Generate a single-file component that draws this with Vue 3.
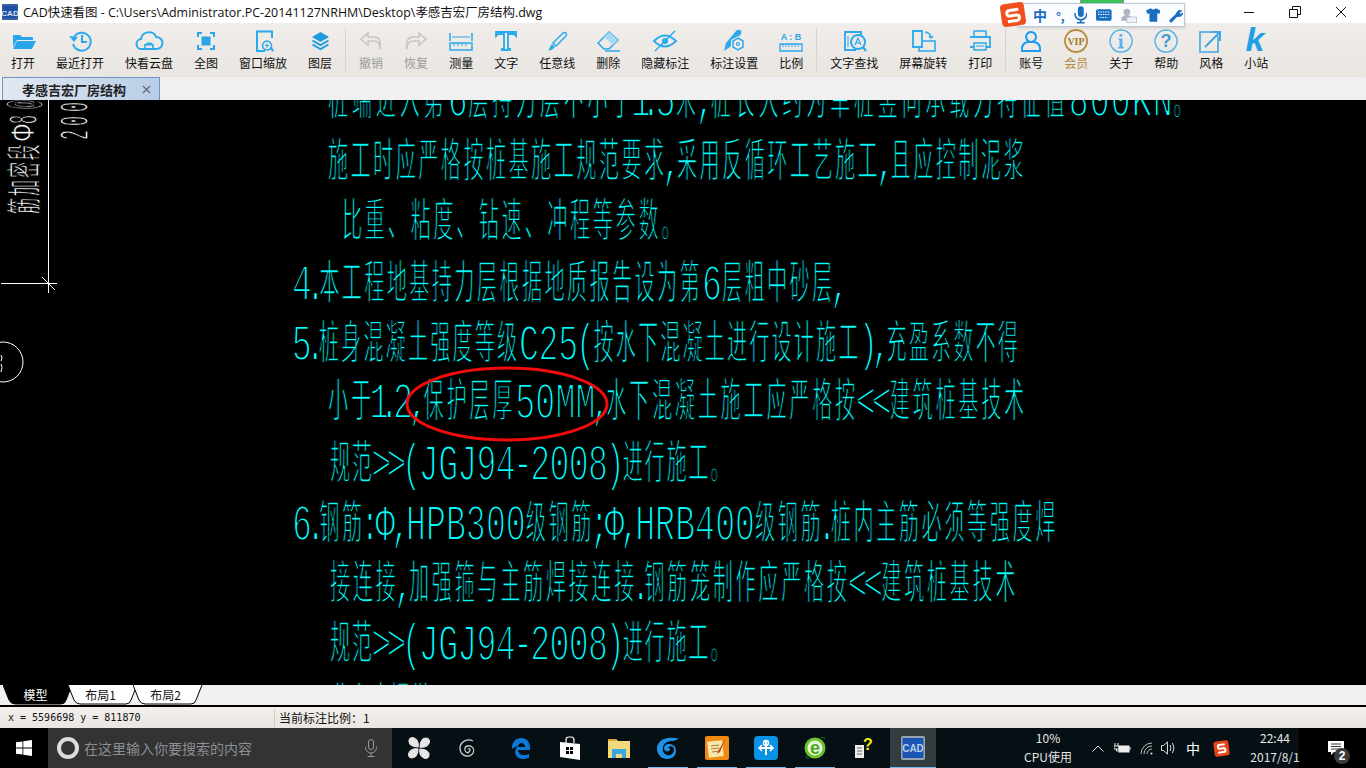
<template>
  <div class="app">
    <header class="titlebar">
      <svg class="app-icon" width="16" height="16" viewBox="0 0 16 16">
        <rect width="16" height="16" rx="1" fill="#3b5f9e" />
        <rect x="1" y="2" width="14" height="12" fill="#1f4fa8" />
        <text x="8" y="11.500" text-anchor="middle" font-size="8" font-weight="700" fill="#d8e4f4" font-family="Liberation Sans">CAD</text>
      </svg>
      <span class="title-text">CAD快速看图 - C:\Users\Administrator.PC-20141127NRHM\Desktop\孝感吉宏厂房结构.dwg</span>
      <div class="win-controls">
        <svg width="12" height="12" viewBox="0 0 12 12"><path d="M1 6.500h10" stroke="#111" /></svg>
        <svg width="12" height="12" viewBox="0 0 12 12" fill="none" stroke="#111"><path d="M.5 3.500h8v8h-8zM3.500 3.500v-3h8v8h-3" /></svg>
        <svg width="12" height="12" viewBox="0 0 12 12"><path d="M1 1l10 10M11 1L1 11" stroke="#111" /></svg>
      </div>
    </header>

    <nav class="toolbar">
      <template v-for="item in tools" :key="item.label">
        <div v-if="item.sep" class="tool-sep"></div>
        <div class="tool" :class="{ muted: item.muted, gold: item.gold }">
          <svg class="tool-icon" width="32" height="28" viewBox="0 0 32 28">
            <template v-for="(p, i) in item.icon" :key="i">
              <text v-if="p.text" :x="p.x" :y="p.y" text-anchor="middle" :font-size="p.size" :font-weight="p.weight || 700"
                :font-style="p.italic ? 'italic' : 'normal'" :font-family="p.family || 'Liberation Sans'" :fill="p.color || item.color">{{ p.text }}</text>
              <path v-else :d="p.d" :fill="p.fill ? (p.color || item.color) : 'none'"
                :stroke="p.fill ? 'none' : (p.color || item.color)" :stroke-width="p.w || 2" />
            </template>
          </svg>
          <span class="tool-label">{{ item.label }}</span>
        </div>
      </template>
    </nav>

    <div class="tabrow">
      <div class="doc-tab">
        <span>孝感吉宏厂房结构</span>
        <svg width="9" height="9" viewBox="0 0 9 9"><path d="M1 1l7 7M8 1L1 8" stroke="#667" stroke-width="1.200" /></svg>
      </div>
    </div>

    <main class="canvas">
      <svg width="1366" height="585" viewBox="0 100 1366 585">
        <g stroke="#fff" fill="none" stroke-width="1">
          <path d="M48.500 100V293M1 283.500H57M42 277l13 13" />
          <circle cx="3" cy="362" r="20" />
          <path d="M1 355q2 3 0 6M1 364q2 3 0 8" />
        </g>
        <g class="cad-white">
          <text transform="translate(37 214) rotate(-90) scale(.46 1)" x="0 39 78 117">筋加密段</text>
          <text transform="translate(34 141) rotate(-90) scale(.8 1)">Φ</text>
          <text class="dim" transform="translate(37 124) rotate(-90) scale(.36 1)" x="0 42">8@</text>
          <text class="dim" transform="translate(88 140) rotate(-90) scale(.4 1)" x="0 35 70 105">2000</text>
        </g>
        <g class="cad-cyan">
          <text v-for="run in cadRuns" :key="run.key" :class="{ latin: run.latin }" :transform="`scale(${run.k} 1)`" :x="run.xs" :y="run.y">{{ run.t }}</text>
        </g>
        <ellipse cx="507" cy="404" rx="100" ry="36" fill="none" stroke="#f00c0c" stroke-width="3" />
      </svg>
    </main>

    <div class="sheets">
      <div v-for="(s, i) in sheets" :key="s" class="sheet" :class="{ active: i === 0 }">
        <svg width="70" height="20" viewBox="0 0 70 20">
          <path d="M0 0L6 15Q8 19 12 19H58Q62 19 63 15L69 0" :fill="i === 0 ? '#000' : '#fff'" stroke="#000" />
        </svg>
        <span>{{ s }}</span>
      </div>
    </div>

    <footer class="statusbar">
      <div class="coords">x = 5596698 y = 811870</div>
      <div class="scale">当前标注比例：1</div>
    </footer>

    <div class="taskbar">
      <div class="start">
        <svg width="16" height="16" viewBox="0 0 16 16" fill="#fff"><path d="M0 2.300l6.500-.9v6.200H0zM7.300 1.300L16 0v7.600H7.300zM0 8.400h6.500v6.200L0 13.700zM7.300 8.400H16V16l-8.700-1.200z" /></svg>
      </div>
      <div class="search">
        <span class="cortana"></span>
        <span class="search-text">在这里输入你要搜索的内容</span>
        <svg class="mic" width="14" height="18" viewBox="0 0 14 18" fill="none" stroke="#999"><rect x="4.500" y=".5" width="5" height="10" rx="2.500" /><path d="M1.500 7.500v1a5.500 5.500 0 0 0 11 0v-1M7 14v3M3.500 17.500h7" /></svg>
      </div>
      <div class="apps">
        <div class="app-slot">
          <svg width="22" height="22" viewBox="0 0 22 22" fill="#e6e6e6" stroke="#e6e6e6" stroke-width="1.200"><path d="M10 10C4 10 1 7 1 4s3-4 5-3 5 4 4 9zM12 10c0-6 3-9 6-9s4 3 3 5-4 5-9 4zM12 12c6 0 9 3 9 6s-3 4-5 3-5-4-4-9zM10 12c0 6-3 9-6 9s-4-3-3-5 4-5 9-4z" /></svg>
        </div>
        <div class="app-slot">
          <svg width="20" height="20" viewBox="0 0 20 20" fill="none" stroke="#ccc" stroke-width="1.300"><path d="M15 3C9 0 2 4 2 10s5 9 9 8 6-5 4-8-7-3-8 0 2 6 4 4 1-4-1-3" /></svg>
        </div>
        <div class="app-slot">
          <svg width="20" height="22" viewBox="0 0 20 22" fill="#0c78d6"><path d="M1 11C1 5 5 1 10 1c6 0 9 4 9 10v2H7c0 3 3 5 6 5 2 0 4-.5 5-1.500v4c-2 1-4 1.500-6 1.500-5 0-7-3-8-6 0-3 1-5 3-7-3 1-5 2-6 3zm6-1h7c0-2-1.500-4-3.500-4S7 8 7 10z" /></svg>
        </div>
        <div class="app-slot">
          <svg width="20" height="24" viewBox="0 0 20 24" fill="#fff"><path d="M6 7V4q0-3 3-3h2q3 0 3 3v3" fill="none" stroke="#fff" stroke-width="1.200" /><path d="M0 6l20 2v16L0 21z" /><path d="M6 11h3v3H6zM10 11h3v3h-3zM6 15h3v3H6zM10 15h3v3h-3z" fill="#000" /></svg>
        </div>
        <div class="app-slot">
          <svg width="22" height="20" viewBox="0 0 22 20"><path d="M0 1h8l2 2h12v17H0z" fill="#f3d97c" /><path d="M0 1h8v2H0z" fill="#d9a93c" /><path d="M4 11h14v9h-4v-4H8v4H4z" fill="#3ba7e0" /></svg>
        </div>
        <div class="app-slot">
          <svg width="24" height="24" viewBox="0 0 24 24"><path d="M23 2c-3 1-6-1-11 0C5 3 1 7 1 13s5 10 10 10 9-3 9-8-3-7-7-7c-3 0-5 2-5 4 0 3 3 4 5 3 2-1 1-3-1-3 2-3 6-2 6 2s-4 6-7 5c-3-1-5-4-4-8 1-4 5-6 9-6 3 0 5-1 7-3z" fill="#1e90e8" /></svg>
        </div>
        <div class="app-slot">
          <svg width="24" height="24" viewBox="0 0 24 24"><rect width="24" height="24" rx="2" fill="#f28a12" /><rect x="3" y="5" width="15" height="16" fill="#fbe7ad" transform="rotate(-6 10 13)" /><path d="M6 10l8-1M6 13l8-1M7 16l8-1" stroke="#a57a40" /><path d="M21 2L13 15l-1 3 3-2z" fill="#b5501e" /></svg>
        </div>
        <div class="app-slot">
          <svg width="24" height="24" viewBox="0 0 24 24"><rect width="24" height="24" rx="4" fill="#0a93e6" /><path d="M12 5v14M5 12h14" stroke="#fff" stroke-width="2" /><circle cx="12" cy="7" r="2.500" fill="none" stroke="#fff" stroke-width="1.500" /><path d="M8 9l-3 3 3 3M16 9l3 3-3 3" fill="none" stroke="#fff" stroke-width="1.500" /></svg>
        </div>
        <div class="app-slot">
          <svg width="24" height="24" viewBox="0 0 24 24"><circle cx="12" cy="12" r="10.500" fill="#6cc22c" /><circle cx="12" cy="12" r="7.500" fill="#e8f6dc" /><text x="12" y="18" text-anchor="middle" font-size="18" font-weight="700" fill="#4ea81e" font-family="Liberation Sans">e</text><path d="M4 20q-2 3 2 2M18 2q4-2 4 1" stroke="#1c6e1c" fill="none" /></svg>
        </div>
        <div class="app-slot">
          <svg width="20" height="22" viewBox="0 0 20 22"><path d="M1 8h9v13H1z" fill="#eee" /><path d="M3 11h5M3 14h5M3 17h5" stroke="#666" /><text x="14" y="13" text-anchor="middle" font-size="16" font-weight="700" fill="#f6e812" font-family="Liberation Sans">?</text></svg>
        </div>
        <div class="app-slot current">
          <svg width="24" height="24" viewBox="0 0 24 24"><rect width="24" height="24" rx="2" fill="#9aa4ae" /><rect x="1.500" y="2" width="21" height="20" fill="#1b56b4" /><text x="12" y="16" text-anchor="middle" font-size="10" font-weight="700" fill="#b9cde8" font-family="Liberation Sans">CAD</text></svg>
        </div>
      </div>
      <div class="tray">
        <div class="cpu"><span>10%</span><span>CPU使用</span></div>
        <svg class="t-chev" width="12" height="7" viewBox="0 0 12 7" fill="none" stroke="#ddd"><path d="M.5 6.500L6 1l5.500 5.500" /></svg>
        <svg class="t-bat" width="17" height="11" viewBox="0 0 17 11"><path d="M1 0v3M4 0v3M0 3h5v3H0zM2.500 6v2h2" stroke="#eee" fill="none" /><rect x="4.500" y="2.500" width="11" height="7" fill="#eee" /><path d="M16 4v3" stroke="#eee" /></svg>
        <svg class="t-wifi" width="14" height="13" viewBox="0 0 14 13" fill="none" stroke="#bbb"><path d="M1 12A11 11 0 0 1 12 1M4 12a8 8 0 0 1 8-8M7 12a5 5 0 0 1 5-5" /><circle cx="11.500" cy="11.500" r="1" fill="#eee" stroke="none" /></svg>
        <svg class="t-vol" width="16" height="14" viewBox="0 0 16 14" fill="none" stroke="#ddd"><path d="M.5 4.500h2l4-3.500v12l-4-3.500h-2zM9 4q2 3 0 6M11.500 2q3 5 0 10" /></svg>
        <span class="t-ime">中</span>
        <span class="t-sogou"><svg width="15" height="15" viewBox="0 0 16 16"><path d="M12 4H6Q4.500 4 4.500 6T6 8h4q2 0 2 2t-2 2H4" fill="none" stroke="#fff" stroke-width="2.300" /></svg></span>
        <div class="clock"><span>22:44</span><span>2017/8/1</span></div>
      </div>
      <div class="notify">
        <svg width="16" height="14" viewBox="0 0 16 14"><path d="M0 0h16v11H6l-3 3v-3H0z" fill="#fff" /><path d="M3 3h10M3 5.500h10M3 8h10" stroke="#333" /></svg>
        <span class="badge">2</span>
      </div>
      <i v-for="u in underlines" :key="u[0]" class="underline" :style="{ left: u[0] + 'px', width: u[1] + 'px' }"></i>
    </div>

    <div class="sogou">
      <div class="sogou-tab"></div>
      <div class="sogou-panel">
        <span class="sg-zh">中</span>
        <span class="sg-punc">°,</span>
        <svg width="14" height="18" viewBox="0 0 14 18" fill="#1a6ec2"><rect x="4" y="0" width="6" height="11" rx="3" /><path d="M1 7v1a6 6 0 0 0 12 0V7M7 14v3M3 17h8" fill="none" stroke="#1a6ec2" stroke-width="1.600" /></svg>
        <svg width="16" height="12" viewBox="0 0 16 12"><rect width="16" height="12" rx="2" fill="#1a6ec2" /><path d="M2 3h12M2 5.500h12M4 8.500h8" stroke="#fff" stroke-dasharray="1.500 1" /></svg>
        <svg width="16" height="15" viewBox="0 0 16 15"><circle cx="6" cy="4" r="3.500" fill="#aeb8c4" /><path d="M0 13q0-6 6-6 4 0 5 3v3z" fill="#aeb8c4" /><rect x="6" y="9" width="10" height="6" fill="#eef1f5" stroke="#a0a8b4" stroke-width=".6" /></svg>
        <svg width="15" height="14" viewBox="0 0 15 14" fill="#1a6ec2"><path d="M5 0L0 2.500 1.500 6 3.500 5.300V14h8V5.300L13.500 6 15 2.500 10 0Q7.500 2.500 5 0z" /></svg>
        <svg width="15" height="15" viewBox="0 0 15 15" fill="none" stroke="#1a6ec2"><path d="M2 13L8 7" stroke-width="3.200" stroke-linecap="round" /><path d="M8 8a4 4 0 0 1 5-5.500L10.500 5l1 1.500L14 5a4 4 0 0 1-6 3z" fill="#1a6ec2" stroke-width="1" /></svg>
      </div>
      <div class="sogou-logo"><svg width="18" height="18" viewBox="0 0 18 18"><path d="M15 4H6Q3 4 3 7T6 9.500h6Q15 9.500 15 12t-3 3H3" fill="none" stroke="#fff" stroke-width="3" /></svg></div>
    </div>
  </div>
</template>

<script setup>
const blue = '#2aa9ec'
const grey = '#c6c6c6'
const s = (d, w) => ({ d, w })
const f = (d, color) => ({ d, fill: true, color })

const tools = [
  { label: '打开', color: '#2aa5ea', icon: [f('M6 8h7l2 2h11v3H10l-4 7z'), f('M10 14h19l-4 8H6z')] },
  { label: '最近打开', color: blue, icon: [s('M10 10a9 9 0 1 1 -1 7'), f('M5 9l5 6 4-5z'), s('M18 8v7h5')] },
  { label: '快看云盘', color: blue, icon: [s('M9 22a5 5 0 0 1-1-10c1-8 13-9 15-2a6 6 0 0 1 1 12z'), s('M12 20a4 4 0 0 1 8 0v2h-8z', 1.500), f('M11 17h10v1.500H11z')] },
  { label: '全图', color: '#2aa5ea', icon: [s('M8 10V6h4M20 6h4v4M24 18v4h-4M12 22H8v-4'), f('M11.500 9.500h9v9h-9z')] },
  { label: '窗口缩放', color: blue, icon: [s('M25 11V4.500H10V24h8'), s('M20 14a4.500 4.500 0 1 0 .1 0z', 1.500), s('M23.500 21l3 3', 2.200), s('M18 18.500h4M20 16.500v4', 1.200)] },
  { label: '图层', color: '#1f9be0', icon: [f('M16.500 5l8.500 5-8.500 5L8 10z'), s('M8.500 13.500l8 4.500 8-4.500'), s('M8.500 17.500l8 4.500 8-4.500')] },
  { label: '撤销', color: grey, sep: true, muted: true, icon: [s('M13 6l-7 6 7 6v-4h6q6 0 6 8 2-12-6-12h-6z', 1.500)] },
  { label: '恢复', color: grey, muted: true, icon: [s('M19 6l7 6-7 6v-4h-6q-6 0-6 8-2-12 6-12h6z', 1.500)] },
  { label: '测量', color: blue, icon: [s('M5 6v8M27 6v8', 1.500), f('M7 9.500h18v1H7z'), s('M5 16h22v7H5z', 1.500), s('M9 16v3M13 16v3M17 16v3M21 16v3', 1)] },
  { label: '文字', color: blue, icon: [s('M6 9V5h20v4l-2-2h-6v15h2v1h-8v-1h2V7H8z', 1.800)] },
  { label: '任意线', color: blue, icon: [s('M12 16L22 6q2-1 3 0t0 3L15 19z', 1.500), f('M11 17l3 3-2 2q-2 2-5 1 2-1 2-3z')] },
  { label: '删除', color: blue, icon: [s('M6 16L17 5l9 8-9 9h-5z', 1.500), f('M12 10l5-5 9 8-5 5z', '#a8d8f4'), s('M13 24h15', 1.500)] },
  { label: '隐藏标注', color: blue, icon: [s('M5 14q11-11 22 0-11 11-22 0z', 1.800), f('M13 14a3 3 0 1 0 6 0 3 3 0 1 0-6 0z'), s('M6 24L26 4', 1.500)] },
  { label: '标注设置', color: blue, icon: [f('M6 24l2-8 10-12q2-2 4-1t1 4L12 20z'), f('M20 9l7 4v8l-7 4-7-4v-8z', '#efebe7'), s('M20 11l5 3v6l-5 3-5-3v-6z', 1.500), s('M20 15.500a1.500 1.500 0 1 1-.1 0z', 1.200)] },
  { label: '比例', color: blue, icon: [{ text: 'A : B', x: 16, y: 13, size: 9, color: '#2aa5ea' }, s('M5 17h22v7H5z', 1.300), s('M8 17v3M11 17v3M14 17v3M17 17v3M20 17v3M23 17v3', 1)] },
  { label: '文字查找', color: blue, sep: true, icon: [s('M23 9V5H7v18h11', 1.800), s('M10 9v11', 1), s('M20 8a7 7 0 1 0 .1 0z', 1.800), s('M25 20l3 4', 2.200), s('M17 18l3-7 3 7M18 16h4', 1.200)] },
  { label: '屏幕旋转', color: blue, icon: [s('M6 4h9v16H6z', 1.800), s('M15 14h13v10H12v-4', 1.500), s('M18 5q6 1 6 6M22 9l2 2 2-2', 1.300)] },
  { label: '打印', color: blue, icon: [s('M10 9V4h12v5', 1.500), s('M6 10h20v10h-4M10 20H6z', 1.800), s('M10 16h12v7H10z', 1.500), s('M12 19h8', 1)] },
  { label: '账号', color: '#1a9cf0', sep: true, icon: [s('M16 5a5 5 0 1 0 .1 0z'), s('M7 24q-1-8 6-9h6q7 1 6 9z')] },
  { label: '会员', color: '#b98a3a', gold: true, icon: [s('M16 3a11 11 0 1 0 .1 0z', 1.800), { text: 'VIP', x: 16, y: 18, size: 10, family: 'Liberation Serif', color: '#a57a25' }] },
  { label: '关于', color: '#55b4ea', icon: [s('M16 3a11 11 0 1 0 .1 0z', 1.500), f('M14.500 7h3v2.500h-3zM13.500 11.500h4V20h1.500v1.500h-6V20h1.500v-7h-1z')] },
  { label: '帮助', color: '#55b4ea', icon: [s('M16 3a11 11 0 1 0 .1 0z', 1.500), { text: '?', x: 16, y: 20, size: 18, color: '#3d9fd8' }] },
  { label: '风格', color: '#3fa8e4', icon: [s('M23 5H5v20h18V9', 1.600), s('M10 20L24 6M16 5h9v9', 2)] },
  { label: '小站', color: '#1fa0e4', icon: [{ text: 'k', x: 15, y: 24, size: 34, italic: true, family: 'Liberation Sans' }] },
]

// CAD text: every char gets its own cell, narrow ones less, latin runs less squeezed
const isLatin = (c) => /[\x00-\x7FΦ]/.test(c)
const cell = (c) => {
  if (c === '.') return 0.35
  if (/[,:;]/.test(c)) return 0.5
  if (c === '1') return 0.55
  if (/[<>()-]/.test(c)) return 0.75
  return isLatin(c) ? 0.95 : 1.08
}
const LATIN_K = 0.64
const CJK_K = 0.44
const LATIN_ADV = 52 * 0.6 * LATIN_K

const rawLines = [
  { x: 328, y: 114, w: 869, t: '桩端进入第6层持力层不小于1.5米,桩长大约为单桩竖向承载力特征值800KN。' },
  { x: 328, y: 176, w: 698, t: '施工时应严格按桩基施工规范要求,采用反循环工艺施工,且应控制泥浆' },
  { x: 342, y: 236, w: 342, t: '比重、粘度、钻速、冲程等参数。' },
  { x: 292, y: 298, w: 553, t: '4.本工程地基持力层根据地质报告设为第6层粗中砂层,' },
  { x: 292, y: 358, w: 728, t: '5.桩身混凝土强度等级C25(按水下混凝土进行设计施工),充盈系数不得' },
  { x: 328, y: 416, w: 699, t: '小于1.2,保护层厚50MM,水下混凝土施工应严格按<<建筑桩基技术' },
  { x: 330, y: 478, w: 402, t: '规范>>(JGJ94-2008)进行施工。' },
  { x: 292, y: 538, w: 766, t: '6.钢筋:Φ,HPB300级钢筋;Φ,HRB400级钢筋.桩内主筋必须等强度焊' },
  { x: 330, y: 598, w: 688, t: '接连接,加强箍与主筋焊接连接.钢筋笼制作应严格按<<建筑桩基技术' },
  { x: 330, y: 658, w: 402, t: '规范>>(JGJ94-2008)进行施工。' },
  { x: 330, y: 720, w: 100, t: '业主应提供' },
]

const cadRuns = rawLines.flatMap((l, li) => {
  const chars = [...l.t]
  const pitch = l.w / chars.reduce((sum, c) => sum + cell(c), 0)
  let pos = l.x
  const positions = chars.map((c) => {
    // centre latin glyphs in their cell, the mono advance is wider than a punctuation cell
    const w = cell(c) * pitch
    const at = isLatin(c) ? pos + (w - LATIN_ADV) / 2 : pos
    pos += w
    return at
  })
  const runs = []
  let i = 0
  for (const t of l.t.match(/[\x00-\x7FΦ]+|[^\x00-\x7FΦ]+/g)) {
    const latin = isLatin(t[0])
    const k = latin ? LATIN_K : CJK_K
    const xs = positions.slice(i, i + t.length).map((x) => (x / k).toFixed(1)).join(' ')
    runs.push({ key: li + '-' + i, t, k, xs, latin, y: latin ? l.y + 2 : l.y })
    i += t.length
  }
  return runs
})

const sheets = ['模型', '布局1', '布局2']
const underlines = [[648, 40], [697, 40], [746, 40], [795, 40], [890, 46]]
</script>

<style scoped>
.app {
  position: relative;
  width: 1366px;
  height: 768px;
  overflow: hidden;
  display: flex;
  flex-direction: column;
  font-family: "Noto Sans CJK SC", "Open Sans", sans-serif;
  color: #111;
}

.titlebar {
  height: 23px;
  background: #fff;
  display: flex;
  align-items: center;
  padding-left: 2px;
  font-size: 12.45px;
}
.title-text {
  margin-left: 5px;
  font-family: "Open Sans", "Noto Sans CJK SC", sans-serif;
  white-space: nowrap;
}
.win-controls {
  margin-left: auto;
  display: flex;
  gap: 34px;
  padding-right: 19px;
}

.toolbar {
  height: 54px;
  background: linear-gradient(#f0edea, #e9e5e1);
  display: flex;
  gap: 21px;
  padding-left: 11px;
}
.tool {
  display: flex;
  flex-direction: column;
  align-items: center;
  font-size: 12px;
}
.tool-icon {
  flex: none;
  margin: 4px -10px 0;
}
.tool-label {
  white-space: nowrap;
  line-height: 17px;
  margin-top: -1px;
}
.tool.muted .tool-label { color: #9a9a9a; }
.tool.gold .tool-label { color: #b98a3a; }
.tool-sep {
  width: 1px;
  height: 44px;
  margin: 5px -8px 0;
  background: #d6d2ce;
}

.tabrow {
  height: 23px;
  background: #f0f0f0;
  padding-left: 2px;
}
.doc-tab {
  width: 158px;
  height: 23px;
  box-sizing: border-box;
  border: 1px solid #6f92c4;
  border-bottom: none;
  background: linear-gradient(100deg, #e2e9f3, #b7cce6);
  display: flex;
  align-items: center;
  padding-left: 19px;
  font-size: 13px;
  font-weight: 700;
  color: #222;
}
.doc-tab svg { margin-left: 16px; }

.canvas {
  height: 585px;
  background: #000;
  overflow: hidden;
}
.canvas svg { display: block; }
.cad-cyan text, .cad-white text {
  font-family: "Liberation Mono", "Noto Sans CJK SC", monospace;
  stroke: #000;
}
.cad-cyan text {
  font-size: 46px;
  fill: #0ff;
  stroke-width: 1.500px;
}
.cad-cyan text.latin {
  font-size: 52px;
  stroke-width: 1.900px;
}
.cad-white text {
  font-size: 35px;
  fill: #fff;
  stroke-width: 1px;
}
.cad-white text.dim {
  font-size: 42px;
  stroke-width: 1.500px;
}

.sheets {
  height: 20px;
  background: #f0f0f0;
  border-bottom: 2px solid #000;
  display: flex;
  padding-left: 3px;
}
.sheet {
  position: relative;
  width: 65px;
  font-size: 12px;
  text-align: center;
  line-height: 19px;
}
.sheet svg {
  position: absolute;
  left: 0;
  top: 0;
}
.sheet span {
  position: relative;
  display: block;
}
.sheet.active span { color: #fff; }

.statusbar {
  height: 21px;
  background: linear-gradient(#f3f0ed, #e9e5e1);
  display: flex;
  align-items: center;
}
.coords {
  width: 274px;
  box-sizing: border-box;
  padding-left: 8px;
  font-family: "DejaVu Sans Mono", monospace;
  font-size: 10px;
}
.scale {
  border-left: 1px solid #d0ccc8;
  padding-left: 4px;
  font-size: 12px;
  line-height: 18px;
}

.taskbar {
  position: relative;
  height: 40px;
  background: #050f14;
  display: flex;
  align-items: center;
}
.start {
  flex: none;
  width: 48px;
  height: 40px;
  background: #000;
  display: flex;
  align-items: center;
  justify-content: center;
}
.search {
  flex: none;
  width: 344px;
  height: 40px;
  background: #333;
  display: flex;
  align-items: center;
  padding: 0 14px 0 9px;
  box-sizing: border-box;
}
.cortana {
  width: 14px;
  height: 14px;
  border: 4px solid #ddd;
  border-radius: 50%;
  flex: none;
}
.search-text {
  margin-left: 5px;
  font-size: 14px;
  color: #8a8f94;
}
.mic { margin-left: auto; }
.apps {
  flex: none;
  display: flex;
  margin-left: 2px;
  height: 40px;
}
.app-slot {
  width: 49px;
  height: 40px;
  display: flex;
  align-items: center;
  justify-content: center;
}
.app-slot:nth-child(3) { margin-left: 4px; }
.app-slot.current {
  width: 46px;
  margin-left: 2px;
  background: #333d40;
}
.tray {
  position: relative;
  z-index: 1;
  flex: 1;
  height: 40px;
  display: flex;
  align-items: center;
  color: #e6e6e6;
  font-size: 12px;
}
.cpu, .clock {
  display: flex;
  flex-direction: column;
  align-items: center;
  line-height: 19px;
  white-space: nowrap;
  flex: none;
  margin-top: -2px;
}
.cpu { margin-left: 82px; width: 60px; }
.t-chev { margin-left: 14px; }
.t-bat { margin-left: 10px; }
.t-wifi { margin-left: 9px; }
.t-vol { margin-left: 7px; }
.t-ime {
  margin-left: 9px;
  font-size: 14px;
  color: #fff;
}
.t-sogou {
  margin-left: 14px;
  width: 15px;
  height: 15px;
  background: #e8451a;
  border-radius: 2px;
  transform: rotate(-8deg);
  display: flex;
}
.clock { margin-left: 22px; width: 48px; }
.notify {
  position: relative;
  flex: none;
  width: 69px;
  height: 40px;
  background: #000;
  display: flex;
  align-items: center;
  padding-left: 29px;
  box-sizing: border-box;
}
.badge {
  position: absolute;
  left: 35px;
  top: 20px;
  width: 16px;
  height: 16px;
  border-radius: 50%;
  background: #3a3a3a;
  color: #fff;
  font: 700 12px/16px "Liberation Sans", sans-serif;
  text-align: center;
}
.underline {
  position: absolute;
  bottom: 0;
  height: 1px;
  background: #76b9ed;
}

.sogou {
  position: absolute;
  left: 1000px;
  top: 0;
  width: 186px;
  height: 30px;
}
.sogou-tab {
  position: absolute;
  left: 80px;
  top: 0;
  width: 44px;
  height: 4px;
  background: #3cc25c;
  border: 1px solid #999;
  border-top: none;
  box-sizing: border-box;
}
.sogou-panel {
  position: absolute;
  left: 18px;
  top: 3px;
  width: 167px;
  height: 24px;
  box-sizing: border-box;
  background: #fbfcfe;
  border: 1px solid #b9c9d8;
  box-shadow: 0 1px 3px rgba(0, 0, 0, .15);
  display: flex;
  align-items: center;
  gap: 9px;
  padding-left: 14px;
}
.sg-zh {
  font-size: 14px;
  font-weight: 700;
  color: #1a6ec2;
}
.sg-punc {
  font-size: 12px;
  font-weight: 700;
  color: #1a6ec2;
}
.sogou-logo {
  position: absolute;
  left: 1px;
  top: 3px;
  width: 24px;
  height: 23px;
  border-radius: 4px;
  background: #f0501e;
  transform: rotate(-8deg);
  display: flex;
  align-items: center;
  justify-content: center;
}
</style>

<style>
html, body {
  margin: 0;
  background: #000;
}
</style>
